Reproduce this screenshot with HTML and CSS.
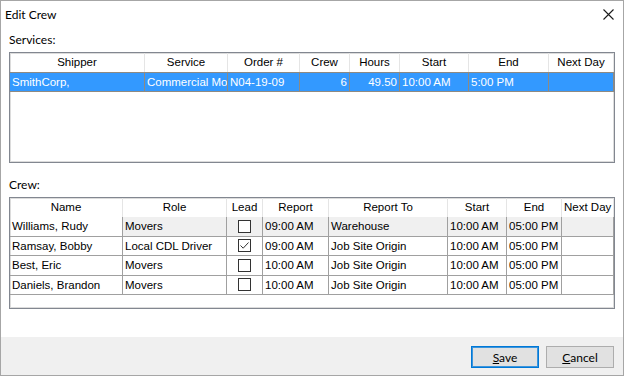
FILE: index.html
```html
<!DOCTYPE html>
<html lang="en">
<head>
    <meta charset="UTF-8">
    <title>Edit Crew</title>
    <link rel="stylesheet" href="styles.css">
</head>
<body>

<div class="dialog">
    <div class="titlebar">
        <span class="title">Edit Crew</span>
        <span class="close">
            <svg width="11" height="11" viewBox="0 0 11 11"><path d="M0.5 0.5 L10.5 10.5 M10.5 0.5 L0.5 10.5" stroke="#1a1a1a" stroke-width="1.1" fill="none"/></svg>
        </span>
    </div>

    <div class="content">
        <div class="label">Services:</div>
        <div class="grid services">
            <div class="row head">
                <div class="cell">Shipper</div>
                <div class="cell">Service</div>
                <div class="cell">Order #</div>
                <div class="cell">Crew</div>
                <div class="cell">Hours</div>
                <div class="cell">Start</div>
                <div class="cell">End</div>
                <div class="cell">Next Day</div>
            </div>
            <div class="row selected">
                <div class="cell">SmithCorp,</div>
                <div class="cell">Commercial Move</div>
                <div class="cell">N04-19-09</div>
                <div class="cell num">6</div>
                <div class="cell num">49.50</div>
                <div class="cell">10:00 AM</div>
                <div class="cell">5:00 PM</div>
                <div class="cell"></div>
            </div>
        </div>

        <div class="label crew-label">Crew:</div>
        <div class="grid crew">
            <div class="row head">
                <div class="cell">Name</div>
                <div class="cell">Role</div>
                <div class="cell">Lead</div>
                <div class="cell">Report</div>
                <div class="cell">Report To</div>
                <div class="cell">Start</div>
                <div class="cell">End</div>
                <div class="cell">Next Day</div>
            </div>
            <div class="row body current">
                <div class="cell">Williams, Rudy</div>
                <div class="cell">Movers</div>
                <div class="cell check"><span class="box"></span></div>
                <div class="cell">09:00 AM</div>
                <div class="cell">Warehouse</div>
                <div class="cell">10:00 AM</div>
                <div class="cell">05:00 PM</div>
                <div class="cell"></div>
            </div>
            <div class="row body">
                <div class="cell">Ramsay, Bobby</div>
                <div class="cell">Local CDL Driver</div>
                <div class="cell check"><span class="box">
                    <svg width="11" height="11" viewBox="0 0 11 11"><path d="M1.5 5.5 L4.2 8.2 L9.5 2.5" stroke="#333" stroke-width="1" fill="none"/></svg>
                </span></div>
                <div class="cell">09:00 AM</div>
                <div class="cell">Job Site Origin</div>
                <div class="cell">10:00 AM</div>
                <div class="cell">05:00 PM</div>
                <div class="cell"></div>
            </div>
            <div class="row body">
                <div class="cell">Best, Eric</div>
                <div class="cell">Movers</div>
                <div class="cell check"><span class="box"></span></div>
                <div class="cell">10:00 AM</div>
                <div class="cell">Job Site Origin</div>
                <div class="cell">10:00 AM</div>
                <div class="cell">05:00 PM</div>
                <div class="cell"></div>
            </div>
            <div class="row body">
                <div class="cell">Daniels, Brandon</div>
                <div class="cell">Movers</div>
                <div class="cell check"><span class="box"></span></div>
                <div class="cell">10:00 AM</div>
                <div class="cell">Job Site Origin</div>
                <div class="cell">10:00 AM</div>
                <div class="cell">05:00 PM</div>
                <div class="cell"></div>
            </div>
        </div>
    </div>

    <div class="footer">
        <button class="btn default"><u>S</u>ave</button>
        <button class="btn"><u>C</u>ancel</button>
    </div>
</div>

</body>
</html>
```

FILE: styles.css
```css
body {
    margin: 0;
    font-family: Lato, "Liberation Sans", sans-serif;
    font-size: 12px;
    color: #000;
    background: #fff;
}
.dialog {
    width: 624px;
    height: 376px;
    box-sizing: border-box;
    border: 1px solid #a6a6a6;
    background: #fff;
    display: flex;
    flex-direction: column;
}
.titlebar {
    height: 26px;
    display: flex;
    align-items: center;
    justify-content: space-between;
    padding: 0 9px 0 4px;
}
.title {
    font-size: 12px;
}
.close {
    display: flex;
    width: 11px;
    height: 11px;
}
.content {
    padding: 0 8px;
}
.label {
    box-sizing: border-box;
    height: 25px;
    padding-top: 5px;
    line-height: 16px;
}
.crew-label {
    height: 34px;
    padding-top: 14px;
}
.grid {
    box-sizing: border-box;
    border: 1px solid #828790;
    box-shadow: inset 0 0 0 1px #dcdcdc;
    background: #fff;
    overflow: hidden;
    font-family: "Liberation Sans", Arial, sans-serif;
    font-size: 11.5px;
}
.services {
    height: 111px;
}
.crew {
    height: 112px;
}
.row {
    display: grid;
}
.services .row {
    grid-template-columns: 135px 83px 72px 50px 50px 69px 80px 65px;
}
.crew .row {
    grid-template-columns: 113px 104px 36px 66px 119px 59px 55px 52px;
}
.cell {
    box-sizing: border-box;
    padding: 0 2px;
    white-space: nowrap;
    overflow: hidden;
}
.head .cell {
    height: 19px;
    line-height: 19px;
    text-align: center;
    border-right: 1px solid #e5e5e5;
}
.selected .cell {
    height: 20px;
    line-height: 18px;
    background: #3399ff;
    color: #fff;
    border-top: 1px solid #8e8a82;
    border-bottom: 1px solid #8e8a82;
    border-right: 1px solid #8e8a82;
}
.num {
    text-align: right;
}
.crew .body {
    height: 19.5px;
}
.body .cell {
    line-height: 18px;
    border-right: 1px solid #a0a0a0;
    border-bottom: 1px solid #a0a0a0;
}
.current .cell + .cell {
    background: #f0f0f0;
}
.check {
    display: flex;
    align-items: center;
    justify-content: center;
}
.box {
    box-sizing: border-box;
    width: 13px;
    height: 13px;
    border: 1px solid #333;
    background: #fff;
    display: flex;
}
.footer {
    margin-top: auto;
    height: 38px;
    box-sizing: border-box;
    background: #f0f0f0;
    display: flex;
    justify-content: flex-end;
    align-items: flex-start;
    gap: 7px;
    padding: 9px 9px 0 0;
}
.btn {
    width: 68px;
    height: 22px;
    box-sizing: border-box;
    background: #e1e1e1;
    border: 1px solid #adadad;
    font-family: Lato, "Liberation Sans", sans-serif;
    font-size: 12px;
    color: #000;
    padding: 0;
}
.btn.default {
    border-color: #0078d7;
    box-shadow: inset 0 0 0 1px #3c95dc;
}
```
